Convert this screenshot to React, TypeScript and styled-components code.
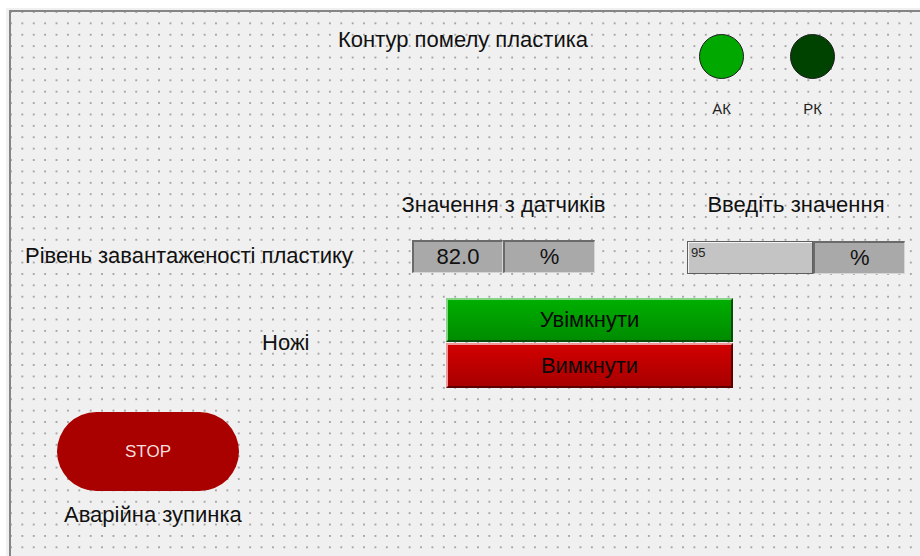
import React from 'react';
import styled, { createGlobalStyle } from 'styled-components';

const GlobalStyle = createGlobalStyle`
  html, body {
    margin: 0;
    padding: 0;
    background: #ffffff;
    overflow: hidden;
  }
  body {
    font-family: "Liberation Sans", Arial, sans-serif;
    color: #111;
  }
`

const Page = styled.div`
  width: 920px;
  height: 556px;
  padding: 8px 0 0 6px;
  box-sizing: border-box;
`

const Frame = styled.div`
  height: 100%;
  background: #f0f0f0;
  padding: 2px 0 0 3px;
  box-sizing: border-box;
`

const Canvas = styled.div`
  height: 100%;
  box-sizing: border-box;
  border-top: 2px solid #858585;
  border-left: 2px solid #858585;
  background-color: #f0f0f0;
  background-image: radial-gradient(circle at 1px 1px, #a6a6a6 0.9px, transparent 1.1px);
  background-size: 11.4px 11.4px;
  background-position: -1px -1px;
  display: flex;
  flex-direction: column;
`

const Label = styled.div<{ $size?: number }>`
  font-size: ${p => p.$size ?? 22}px;
  line-height: 24px;
  white-space: nowrap;
  color: #111;
`

/* top strip: screen title and the two status lamps */
const HeaderRow = styled.div`
  display: flex;
  align-items: flex-start;
  padding-left: 327px;
`

const Title = styled(Label)`
  width: 361px;
  margin-top: 16px;
`

const Lamps = styled.div`
  display: flex;
  gap: 46px;
  margin-top: 22px;
`

const Lamp = styled.div`
  display: flex;
  flex-direction: column;
  align-items: center;
  width: 45px;
  gap: 21px;
`

const LampBulb = styled.div<{ $color: string }>`
  width: 45px;
  height: 45px;
  box-sizing: border-box;
  border-radius: 50%;
  border: 1px solid #1c1c1c;
  background: ${p => p.$color};
`

const LampCaption = styled.div`
  font-size: 15px;
  line-height: 18px;
  color: #222;
`

/* sensor / setpoint table */
const FormGrid = styled.div`
  display: grid;
  grid-template-columns: 387px 183px 310px;
  row-gap: 21px;
  margin-top: 75px;
  padding-left: 14px;
  align-items: center;
`

const Heading = styled.div<{ $shift?: number }>`
  display: flex;
  justify-content: center;
  margin-left: ${p => p.$shift ?? 0}px;
  font-size: 22px;
  line-height: 24px;
  white-space: nowrap;
`

const Field = styled.div<{ $shift?: number }>`
  display: flex;
  height: 33px;
  margin-left: ${p => p.$shift ?? 0}px;
`

const Cell = styled.div<{ $light?: boolean; $flex: number }>`
  flex: ${p => p.$flex};
  display: flex;
  align-items: center;
  justify-content: center;
  box-sizing: border-box;
  border-top: 2px solid #6a6a6a;
  border-left: 2px solid #6a6a6a;
  border-right: 1px solid #d6d6d6;
  border-bottom: 1px solid #d6d6d6;
  background: ${p => (p.$light ? '#c6c6c6' : '#a9a9a9')};
  font-size: 22px;
  color: #111;
`

const InputCell = styled.div`
  flex: 126;
  box-sizing: border-box;
  border: 1px solid #5e5e5e;
  box-shadow: inset 1px 1px 0 #f4f4f4;
  background: #c4c4c4;
  font-size: 13px;
  line-height: 16px;
  padding: 3px 0 0 3px;
  color: #222;
`

const SetpointField = styled(Field)`
  margin-top: 3px;
`

/* knives on/off control */
const KnivesRow = styled.div`
  display: flex;
  align-items: center;
  padding-left: 251px;
  margin-top: 24px;
`

const KnivesLabel = styled(Label)`
  width: 184px;
`

const ButtonStack = styled.div`
  display: flex;
  flex-direction: column;
  width: 287px;
  gap: 1px;
`

const CmdButton = styled.button<{ $tone: 'on' | 'off' }>`
  height: ${p => (p.$tone === 'on' ? 44 : 45)}px;
  box-sizing: border-box;
  border: 2px solid;
  border-color: ${p =>
    p.$tone === 'on'
      ? '#86d486 #0a4a0a #0a4a0a #86d486'
      : '#ee9a9a #5a0000 #5a0000 #ee9a9a'};
  background: ${p =>
    p.$tone === 'on'
      ? 'linear-gradient(#00ae00, #008c00)'
      : 'linear-gradient(#d20000, #a80000)'};
  font-family: "Liberation Sans", Arial, sans-serif;
  font-size: 22px;
  color: #0a0a0a;
  padding: 0;
  cursor: pointer;
`

/* emergency stop */
const StopBlock = styled.div`
  display: flex;
  flex-direction: column;
  align-items: flex-start;
  padding-left: 46px;
  margin-top: 24px;
  gap: 12px;
`

const StopButton = styled.button`
  width: 182px;
  height: 79px;
  border: none;
  border-radius: 40px;
  background: #a90000;
  color: #f6dede;
  font-family: "Liberation Sans", Arial, sans-serif;
  font-size: 17px;
  cursor: pointer;
`

const StopCaption = styled(Label)`
  margin-left: 7px;
`

export default function App() {
  return (
    <>
      <GlobalStyle />
      <Page>
        <Frame>
          <Canvas>
            <HeaderRow>
              <Title>Контур помелу пластика</Title>
              <Lamps>
                <Lamp>
                  <LampBulb $color="#00a800" />
                  <LampCaption>АК</LampCaption>
                </Lamp>
                <Lamp>
                  <LampBulb $color="#004200" />
                  <LampCaption>РК</LampCaption>
                </Lamp>
              </Lamps>
            </HeaderRow>

            <FormGrid>
              <div />
              <Heading>Значення з датчиків</Heading>
              <Heading $shift={92}>Введіть значення</Heading>

              <Label>Рівень завантаженості пластику</Label>
              <Field>
                <Cell $flex={91}>82.0</Cell>
                <Cell $flex={92}>%</Cell>
              </Field>
              <SetpointField $shift={92}>
                <InputCell>95</InputCell>
                <Cell $flex={92}>%</Cell>
              </SetpointField>
            </FormGrid>

            <KnivesRow>
              <KnivesLabel>Ножі</KnivesLabel>
              <ButtonStack>
                <CmdButton $tone="on">Увімкнути</CmdButton>
                <CmdButton $tone="off">Вимкнути</CmdButton>
              </ButtonStack>
            </KnivesRow>

            <StopBlock>
              <StopButton>STOP</StopButton>
              <StopCaption>Аварійна зупинка</StopCaption>
            </StopBlock>
          </Canvas>
        </Frame>
      </Page>
    </>
  );
}
